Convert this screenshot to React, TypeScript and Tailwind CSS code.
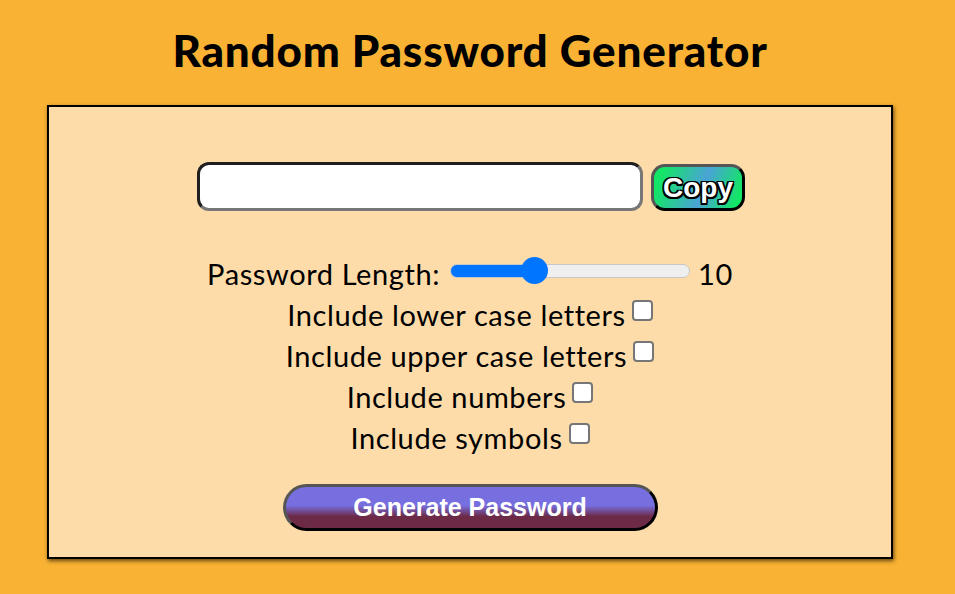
// Random password generator - orange page, cream card with controls

import { useState } from "react"

// ── Helpers ───────────────────────────────────────────────────────────────────

const OPTIONS = [
  "Include lower case letters",
  "Include upper case letters",
  "Include numbers",
  "Include symbols",
]

const MIN = 5
const MAX = 20

// ── Component ─────────────────────────────────────────────────────────────────

export default function App() {
  const [length, setLength] = useState(10)
  const [checked, setChecked] = useState<boolean[]>([false, false, false, false])
  const pct = ((length - MIN) / (MAX - MIN)) * 100

  return (
    <div
      className="w-[955px] h-[594px] bg-[#f9b233] overflow-hidden"
      style={{ fontFamily: "Lato, 'Noto Sans', sans-serif" }}
    >
      <div className="w-[940px] flex flex-col items-center">
        <h1 className="mt-[22px] h-[57px] text-[44px] leading-[57px] font-black text-black tracking-[0.8px]">
          Random Password Generator
        </h1>

        <div className="mt-[26px] w-[846px] h-[454px] bg-[#fddcaa] border-2 border-black shadow-[1px_2px_4px_rgba(0,0,0,0.6)] flex flex-col items-center">
          {/* output + copy */}
          <div className="mt-[54px] flex items-center gap-[8px] pl-[2px]">
            <input
              type="text"
              readOnly
              className="w-[446px] h-[49px] bg-white rounded-[12px] border-[3px] border-t-[#1f1f1f] border-l-[#1f1f1f] border-b-[#777] border-r-[#777] outline-none"
            />
            <button
              className="mt-[3px] w-[94px] h-[47px] rounded-[14px] border-[3px] border-t-[#555] border-l-[#555] border-b-black border-r-black bg-[linear-gradient(110deg,#13e566_10%,#4aa3d6_55%,#13e566_92%)] text-white text-[28px] font-bold leading-none [text-shadow:-1.5px_-1.5px_0_#000,1.5px_-1.5px_0_#000,-1.5px_1.5px_0_#000,1.5px_1.5px_0_#000,0_1.5px_0_#000,0_-1.5px_0_#000,1.5px_0_0_#000,-1.5px_0_0_#000]"
              style={{ fontFamily: "'Liberation Sans', Arial, sans-serif" }}
            >
              Copy
            </button>
          </div>

          {/* length slider */}
          <div className="mt-[42px] h-[41px] flex items-center text-[29px] tracking-[0.6px] text-black">
            <span>Password Length:</span>
            <input
              type="range"
              min={MIN}
              max={MAX}
              value={length}
              onChange={(e) => setLength(Number(e.target.value))}
              className="ml-[10px] w-[240px] h-[14px] mt-[-6px] appearance-none rounded-full border border-[#c8c8c8] outline-none [&::-webkit-slider-thumb]:appearance-none [&::-webkit-slider-thumb]:w-[27px] [&::-webkit-slider-thumb]:h-[27px] [&::-webkit-slider-thumb]:rounded-full [&::-webkit-slider-thumb]:bg-[#0075ff]"
              style={{
                background: `linear-gradient(to right, #0075ff ${pct}%, #efefef ${pct}%)`,
              }}
            />
            <span className="ml-[8px]">{length}</span>
          </div>

          {/* options */}
          {OPTIONS.map((label, i) => (
            <label
              key={label}
              className="h-[41px] flex items-center text-[29px] tracking-[0.6px] text-black"
            >
              <span>{label}</span>
              <input
                type="checkbox"
                checked={checked[i]}
                onChange={() =>
                  setChecked((c) => c.map((v, j) => (j === i ? !v : v)))
                }
                className="ml-[6px] mt-[-8px] w-[21px] h-[21px] appearance-none bg-white rounded-[4px] border-2 border-[#767676]"
              />
            </label>
          ))}

          {/* generate */}
          <button
            className="mt-[26px] w-[375px] h-[47px] rounded-full border-[3px] border-t-[#555] border-l-[#555] border-b-black border-r-black bg-[linear-gradient(to_bottom,#776fe0_45%,#6c2a47_72%)] text-white text-[25px] font-bold"
            style={{ fontFamily: "'Liberation Sans', Arial, sans-serif" }}
          >
            Generate Password
          </button>
        </div>
      </div>
    </div>
  )
}
